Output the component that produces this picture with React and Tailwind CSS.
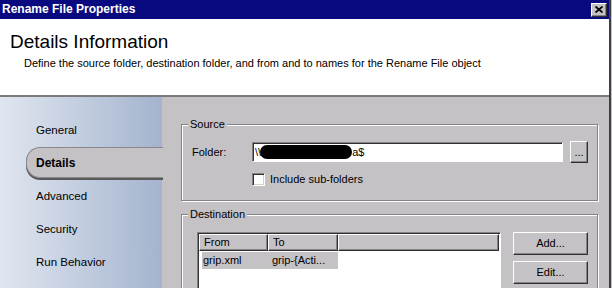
const raised =
  "bg-[#c5c2c6] border border-t-white border-l-white border-r-[#303030] border-b-[#303030] shadow-[inset_-1px_-1px_0_#858285]";

function Group({ label, className, children }) {
  return (
    <div
      className={
        "relative border border-[#858285] shadow-[inset_1px_1px_0_#ffffff,1px_1px_0_#ffffff] " +
        className
      }
    >
      <span className="absolute left-[6px] -top-[8px] bg-[#c5c2c6] px-[2px] leading-[14px]">
        {label}
      </span>
      {children}
    </div>
  );
}

export default function App() {
  const items = ["General", "Details", "Advanced", "Security", "Run Behavior"];
  return (
    <div className="w-[612px] h-[288px] overflow-hidden flex bg-[#c5c2c6] font-['Liberation_Sans',Arial,sans-serif] text-[11px] text-black">
      <div className="w-[609px] flex flex-col">
        {/* title bar */}
        <div className="h-[19px] shrink-0 bg-[#0a0a80] flex items-center justify-between pl-[2px] pr-[2px]">
          <span className="text-white font-bold text-[12px] leading-[19px]">
            Rename File Properties
          </span>
          <div className={"w-[16px] h-[14px] flex items-center justify-center " + raised}>
            <svg width="8" height="7" viewBox="0 0 8 7">
              <path d="M0.5 0.5 L7.5 6.5 M7.5 0.5 L0.5 6.5" stroke="#000" strokeWidth="1.8" />
            </svg>
          </div>
        </div>
        {/* header */}
        <div className="h-[78px] shrink-0 bg-white border-b-2 border-[#7a7a7a] pl-[10px] pt-[11px]">
          <div className="text-[19px] leading-[24px]">Details Information</div>
          <div className="pl-[14px] pt-[3px] text-[11px] leading-[13px]">
            Define the source folder, destination folder, and from and to names for the Rename File object
          </div>
        </div>
        {/* body */}
        <div className="flex-1 flex min-h-0">
          <div className="w-[162px] shrink-0 bg-gradient-to-r from-[#e0e6f0] to-[#a4b4ce] pt-[17px] flex flex-col">
            {items.map((it) =>
              it === "Details" ? (
                <div key={it} className="h-[33px] pl-[26px] -mr-[1px] relative z-10">
                  <div className="h-[31px] rounded-l-[14px] bg-[#c5c2c6] border border-r-0 border-[#8a888a] shadow-[0_2px_0_#5a5a5a] flex items-center pl-[9px] font-bold text-[12px]">
                    Details
                  </div>
                </div>
              ) : (
                <div key={it} className="h-[33px] flex items-center pl-[36px] text-[11.5px]">
                  {it}
                </div>
              )
            )}
          </div>
          <div className="flex-1 pl-[19px] pt-[27px] flex flex-col">
            <Group label="Source" className="w-[417px] h-[77px] shrink-0">
              <div className="pt-[16px] pl-[10px] flex items-center">
                <span className="w-[60px]">Folder:</span>
                <div className="w-[311px] h-[20px] bg-white border border-t-[#858285] border-l-[#858285] border-r-white border-b-white shadow-[inset_1px_1px_0_#303030] flex items-center pl-[2px] overflow-hidden whitespace-nowrap">
                  <span>\\</span>
                  <span className="inline-block w-[92px] h-[14px] bg-black rounded-[8px] -ml-[1px]" />
                  <span>a$</span>
                </div>
                <div className={"ml-[7px] w-[18px] h-[22px] flex items-center justify-center leading-none " + raised}>
                  ...
                </div>
              </div>
              <div className="ml-[70px] mt-[8px] flex items-center">
                <div className="w-[13px] h-[13px] bg-white border border-t-[#858285] border-l-[#858285] border-r-white border-b-white shadow-[inset_1px_1px_0_#303030,inset_-1px_-1px_0_#d4d0c8]" />
                <span className="ml-[5px]">Include sub-folders</span>
              </div>
            </Group>
            <Group label="Destination" className="w-[417px] flex-1 mt-[13px] border-b-0">
              <div className="pt-[17px] pl-[15px] flex items-start">
                <div className="w-[304px] h-[80px] bg-white border border-t-[#858285] border-l-[#858285] border-r-white border-b-white shadow-[inset_1px_1px_0_#303030] p-[1px] pl-[1px]">
                  <div className="flex h-[17px]">
                    <div className={"w-[69px] pl-[4px] flex items-center " + raised}>From</div>
                    <div className={"w-[70px] pl-[4px] flex items-center " + raised}>To</div>
                    <div className={"flex-1 " + raised} />
                  </div>
                  <div className="ml-[3px] mt-[1px] w-[136px] h-[17px] bg-[#c5c2c6] flex items-center">
                    <span className="w-[70px] pl-[1px]">grip.xml</span>
                    <span>grip-{"{"}Acti...</span>
                  </div>
                </div>
                <div className="ml-[12px] flex flex-col gap-[6px]">
                  <div className={"w-[75px] h-[23px] flex items-center justify-center " + raised}>Add...</div>
                  <div className={"w-[75px] h-[23px] flex items-center justify-center " + raised}>Edit...</div>
                </div>
              </div>
            </Group>
          </div>
        </div>
      </div>
      <div className="w-[3px] shrink-0 border-l-2 border-[#404040] bg-[#c5c2c6]" />
    </div>
  );
}
